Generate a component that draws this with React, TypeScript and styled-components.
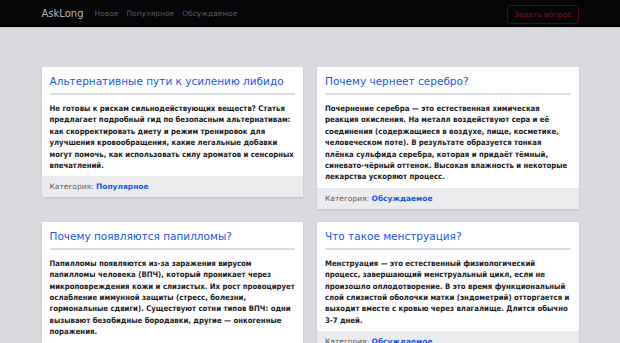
import React from "react";
import styled, { createGlobalStyle } from "styled-components";

type Post = {
  title: string;
  text: string;
  category?: string;
};

const posts: Post[] = [
  {
    title: "Альтернативные пути к усилению либидо",
    text: "Не готовы к рискам сильнодействующих веществ? Статья предлагает подробный гид по безопасным альтернативам: как скорректировать диету и режим тренировок для улучшения кровообращения, какие легальные добавки могут помочь, как использовать силу ароматов и сенсорных впечатлений.",
    category: "Популярное",
  },
  {
    title: "Почему чернеет серебро?",
    text: "Почернение серебра — это естественная химическая реакция окисления. На металл воздействуют сера и её соединения (содержащиеся в воздухе, пище, косметике, человеческом поте). В результате образуется тонкая плёнка сульфида серебра, которая и придаёт тёмный, синевато-чёрный оттенок. Высокая влажность и некоторые лекарства ускоряют процесс.",
    category: "Обсуждаемое",
  },
  {
    title: "Почему появляются папилломы?",
    text: "Папилломы появляются из-за заражения вирусом папилломы человека (ВПЧ), который проникает через микроповреждения кожи и слизистых. Их рост провоцирует ослабление иммунной защиты (стресс, болезни, гормональные сдвиги). Существуют сотни типов ВПЧ: одни вызывают безобидные бородавки, другие — онкогенные поражения.",
    category: "Популярное",
  },
  {
    title: "Что такое менструация?",
    text: "Менструация — это естественный физиологический процесс, завершающий менструальный цикл, если не произошло оплодотворение. В это время функциональный слой слизистой оболочки матки (эндометрий) отторгается и выходит вместе с кровью через влагалище. Длится обычно 3-7 дней.",
    category: "Обсуждаемое",
  },
];

const GlobalStyle = createGlobalStyle`
  body {
    margin: 0;
    background: #d9dadd;
    font-family: "DejaVu Sans", Verdana, sans-serif;
  }
`;

const App: React.FC = () => {
  return (
    <>
      <GlobalStyle />
      <Navbar>
        <NavInner>
          <Brand>AskLong</Brand>
          <NavLinks>
            <NavLink>Новое</NavLink>
            <NavLink>Популярное</NavLink>
            <NavLink>Обсуждаемое</NavLink>
          </NavLinks>
          <AskButton>Задать вопрос</AskButton>
        </NavInner>
      </Navbar>
      <Main>
        <Grid>
          {posts.map((p) => (
            <Card key={p.title}>
              <CardBody>
                <CardTitle>{p.title}</CardTitle>
                <Divider />
                <CardText>{p.text}</CardText>
              </CardBody>
              <CardFooter>
                Категория: <CategoryLink>{p.category}</CategoryLink>
              </CardFooter>
            </Card>
          ))}
        </Grid>
      </Main>
    </>
  );
};

export default App;

const Navbar = styled.header`
  background: #050507;
  height: 27px;
  border-bottom: 1px solid #c8c9cc;
`;

const NavInner = styled.div`
  width: 537px;
  margin: 0 auto;
  height: 100%;
  display: flex;
  align-items: center;
`;

const Brand = styled.span`
  color: #b8b8bb;
  font-size: 10px;
  margin-right: 11px;
`;

const NavLinks = styled.nav`
  display: flex;
  gap: 8px;
  flex: 1;
`;

const NavLink = styled.span`
  color: #5c5c60;
  font-size: 7.5px;
`;

const AskButton = styled.button`
  background: transparent;
  border: 1px solid #4c0a12;
  border-radius: 3px;
  color: #8a101c;
  font-family: inherit;
  font-size: 7.5px;
  height: 19px;
  padding: 0 6px;
  margin-top: 1px;
`;

const Main = styled.main`
  padding-top: 39px;
`;

const Grid = styled.div`
  width: 537px;
  margin: 0 auto;
  display: grid;
  grid-template-columns: 1fr 1fr;
  column-gap: 14px;
  row-gap: 13px;
  align-items: start;
`;

const Card = styled.article`
  background: #fff;
  box-shadow: 0 1px 2px rgba(0, 0, 0, 0.12);
`;

const CardBody = styled.div`
  padding: 6px 8px 5px;
`;

const CardTitle = styled.h2`
  margin: 0;
  color: #1358f0;
  font-size: 10.5px;
  font-weight: normal;
  line-height: 16px;
`;

const Divider = styled.hr`
  border: 0;
  height: 2px;
  background: #dcdde2;
  margin: 4px 0 8px;
`;

const CardText = styled.p`
  margin: 0;
  color: #1a1a1e;
  font-family: "DejaVu Sans Condensed", "DejaVu Sans", sans-serif;
  font-stretch: condensed;
  font-weight: bold;
  font-size: 7.72px;
  line-height: 11.4px;
`;

const CardFooter = styled.div`
  background: #ececee;
  color: #5a5a60;
  font-size: 7.5px;
  height: 21px;
  display: flex;
  align-items: center;
  padding: 0 8px;
  white-space: pre;
`;

const CategoryLink = styled.span`
  color: #1358f0;
  font-weight: bold;
`;
